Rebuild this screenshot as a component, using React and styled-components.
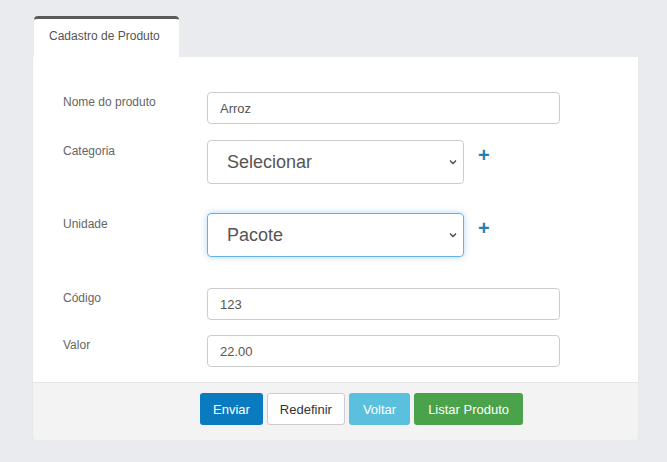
import styled, { createGlobalStyle } from "styled-components";

const GlobalStyle = createGlobalStyle`
  body {
    margin: 0;
    background: #e9ebee;
    font-family: "Liberation Sans", Arial, sans-serif;
  }
`;

const Page = styled.div`
  padding: 16px 0 0 33px;
  width: 605px;
`;

const Tabs = styled.div`
  display: flex;
`;

const Tab = styled.div`
  width: 145px;
  height: 41px;
  margin-left: 1px;
  box-sizing: border-box;
  background: #fff;
  border-top: 3px solid #5a5a5a;
  border-radius: 4px 4px 0 0;
  padding: 10px 0 0 15px;
  font-size: 12px;
  color: #555;
`;

const Card = styled.div`
  background: #fff;
  border-radius: 0 0 4px 4px;
  box-shadow: 0 1px 2px rgba(0, 0, 0, 0.06);
  overflow: hidden;
`;

const Body = styled.div`
  padding: 35px 30px 15px 30px;
`;

const Row = styled.div`
  display: flex;
  align-items: flex-start;
  margin-bottom: ${(p) => p.$gap}px;
`;

const Label = styled.label`
  width: 144px;
  flex-shrink: 0;
  font-size: 12px;
  color: #666;
  padding-top: ${(p) => p.$top}px;
`;

const Input = styled.input`
  width: 353px;
  height: 32px;
  box-sizing: border-box;
  border: 1px solid #ccc;
  border-radius: 4px;
  padding: 0 12px;
  font-family: "Liberation Sans", Arial, sans-serif;
  font-size: 13px;
  color: #555;
  outline: none;
`;

const SelectBox = styled.div`
  position: relative;
  width: 257px;
  height: 44px;
  box-sizing: border-box;
  border: 1px solid ${(p) => (p.$focus ? "#66afe9" : "#ccc")};
  border-radius: 4px;
  box-shadow: ${(p) =>
    p.$focus ? "0 0 6px rgba(102, 175, 233, 0.5)" : "none"};
  display: flex;
  align-items: center;
  padding: 0 19px;
  font-size: 18px;
  color: #555;
`;

const Chevron = styled.svg`
  position: absolute;
  right: 6px;
  top: 18px;
`;

const Plus = styled.span`
  margin-left: 14px;
  margin-top: 5px;
  font-size: 20px;
  font-weight: bold;
  line-height: 1;
  color: #2a7db3;
`;

const Footer = styled.div`
  background: #f3f3f3;
  border-top: 1px solid #e3e3e3;
  height: 58px;
  box-sizing: border-box;
  padding: 10px 0 0 167px;
  display: flex;
  gap: 4px;
  align-items: flex-start;
`;

const Button = styled.button`
  height: 32px;
  padding: 0 ${(p) => p.$px}px;
  border-radius: 3px;
  border: 1px solid ${(p) => (p.$variant === "default" ? "#ccc" : "transparent")};
  background: ${(p) =>
    ({
      primary: "#0b7bc0",
      default: "#fff",
      info: "#5bc0de",
      success: "#4aa34a",
    })[p.$variant]};
  color: ${(p) => (p.$variant === "default" ? "#333" : "#fff")};
  font-family: "Liberation Sans", Arial, sans-serif;
  font-size: 13px;
`;

const Select = ({ value, focus }) => (
  <SelectBox $focus={focus}>
    {value}
    <Chevron width="8" height="6" viewBox="0 0 8 6">
      <path d="M1 1.5 L4 4.5 L7 1.5" fill="none" stroke="#444" strokeWidth="1.3" />
    </Chevron>
  </SelectBox>
);

export default function App() {
  return (
    <>
      <GlobalStyle />
      <Page>
        <Tabs>
          <Tab>Cadastro de Produto</Tab>
        </Tabs>
        <Card>
          <Body>
            <Row $gap={16}>
              <Label $top={3}>Nome do produto</Label>
              <Input defaultValue="Arroz" />
            </Row>
            <Row $gap={29}>
              <Label $top={4}>Categoria</Label>
              <Select value="Selecionar" />
              <Plus>+</Plus>
            </Row>
            <Row $gap={31}>
              <Label $top={4}>Unidade</Label>
              <Select value="Pacote" focus />
              <Plus>+</Plus>
            </Row>
            <Row $gap={15}>
              <Label $top={3}>Código</Label>
              <Input defaultValue="123" />
            </Row>
            <Row $gap={0}>
              <Label $top={3}>Valor</Label>
              <Input defaultValue="22.00" />
            </Row>
          </Body>
          <Footer>
            <Button $variant="primary" $px={12}>Enviar</Button>
            <Button $variant="default" $px={12}>Redefinir</Button>
            <Button $variant="info" $px={13}>Voltar</Button>
            <Button $variant="success" $px={13}>Listar Produto</Button>
          </Footer>
        </Card>
      </Page>
    </>
  );
}
